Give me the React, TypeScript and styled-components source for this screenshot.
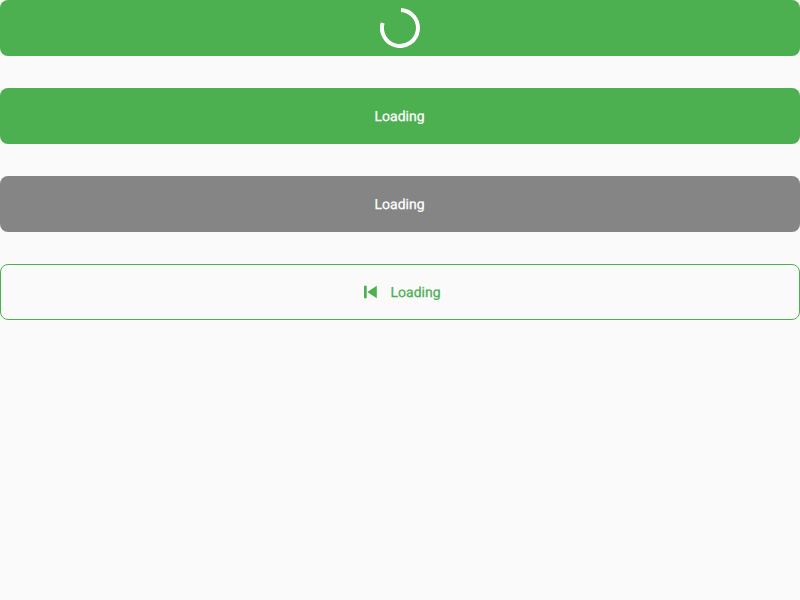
import React from "react";
import styled, { createGlobalStyle } from "styled-components";

const GlobalStyle = createGlobalStyle`
  body { margin: 0; background: #fafafa; }
`;

const Stack = styled.main`
  display: flex;
  flex-direction: column;
  gap: 32px;
`;

type Variant = "primary" | "disabled" | "outlined";

const fills: Record<Variant, string> = {
  primary: "#4caf50",
  disabled: "#858585",
  outlined: "transparent",
};

const Button = styled.button<{ $variant: Variant }>`
  display: flex;
  align-items: center;
  justify-content: center;
  box-sizing: border-box;
  width: 100%;
  height: 56px;
  margin: 0;
  padding: 0;
  border: ${(p) => (p.$variant === "outlined" ? "1px solid #4caf50" : "none")};
  border-radius: 8px;
  background: ${(p) => fills[p.$variant]};
  color: ${(p) => (p.$variant === "outlined" ? "#4caf50" : "#fff")};
  font: 400 14px/20px Roboto, sans-serif;
  letter-spacing: 0.02px;
  -webkit-text-stroke: 0.25px currentColor;
  text-rendering: geometricPrecision;
`;

const Label = styled.span`
  padding: 1px 0.8px 0 0;
`;

const Icon = styled.svg`
  width: 20px;
  height: 20px;
  margin: 0 11px 0 1px;
  fill: currentColor;
`;

const Spinner = styled.svg`
  width: 40px;
  height: 40px;
  fill: none;
  stroke: #fff;
  stroke-width: 4;
`;

export default function App() {
  return (
    <>
      <GlobalStyle />
      <Stack>
        <Button $variant="primary" aria-label="Loading">
          <Spinner viewBox="0 0 40 40">
            <path d="M21 2.03A18 18 0 1 1 2.65 15" />
          </Spinner>
        </Button>
        <Button $variant="primary"><Label>Loading</Label></Button>
        <Button $variant="disabled" disabled><Label>Loading</Label></Button>
        <Button $variant="outlined">
          <Icon viewBox="0 0 20 20">
            <path d="M4 3.800h2.700v12.400H4zM7.300 10L16.800 3.800v12.400z" />
          </Icon>
          <Label>Loading</Label>
        </Button>
      </Stack>
    </>
  );
}
